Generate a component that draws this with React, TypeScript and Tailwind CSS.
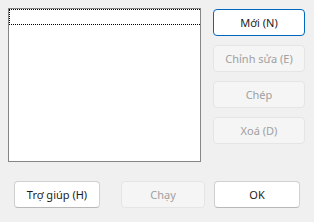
import React from 'react';

function Btn({
    label,
    className = '',
    disabled = false,
    primary = false,
}: {
    label: string;
    className?: string;
    disabled?: boolean;
    primary?: boolean;
}) {
    const look = disabled
        ? 'border-[#e5e5e5] bg-[#f5f5f5] text-[#a0a0a0]'
        : primary
          ? 'border-[#0067c0] bg-white text-[#1b1b1b]'
          : 'border-[#d0d0d0] border-b-[#b8b8b8] bg-white text-[#1b1b1b]';
    return (
        <button
            type="button"
            disabled={disabled}
            className={`flex h-[27px] items-center justify-center rounded-[4px] border text-[11px] leading-none ${look} ${className}`}
        >
            {label}
        </button>
    );
}

export default function App() {
    return (
        <div
            className="flex h-[222px] w-[314px] flex-col bg-[#f0f0f0]"
            style={{ fontFamily: '"Segoe UI", "Noto Sans", "Open Sans", sans-serif' }}
        >
            <div className="flex pt-[8px]">
                <div className="ml-[8px] h-[154px] w-[193px] border border-[#868686] bg-white">
                    <div className="h-[16px] border border-r-0 border-dotted border-black" />
                </div>
                <div className="ml-[12px] mt-[1px] flex w-[92px] flex-col gap-[9px]">
                    <Btn label="Mới (N)" primary />
                    <Btn label="Chỉnh sửa (E)" disabled />
                    <Btn label="Chép" disabled />
                    <Btn label="Xoá (D)" disabled />
                </div>
            </div>
            <div className="mt-[19px] flex">
                <Btn label="Trợ giúp (H)" className="ml-[14px] w-[86px]" />
                <Btn label="Chạy" disabled className="ml-[21px] w-[84px]" />
                <Btn label="OK" className="ml-[9px] w-[86px]" />
            </div>
        </div>
    );
}
